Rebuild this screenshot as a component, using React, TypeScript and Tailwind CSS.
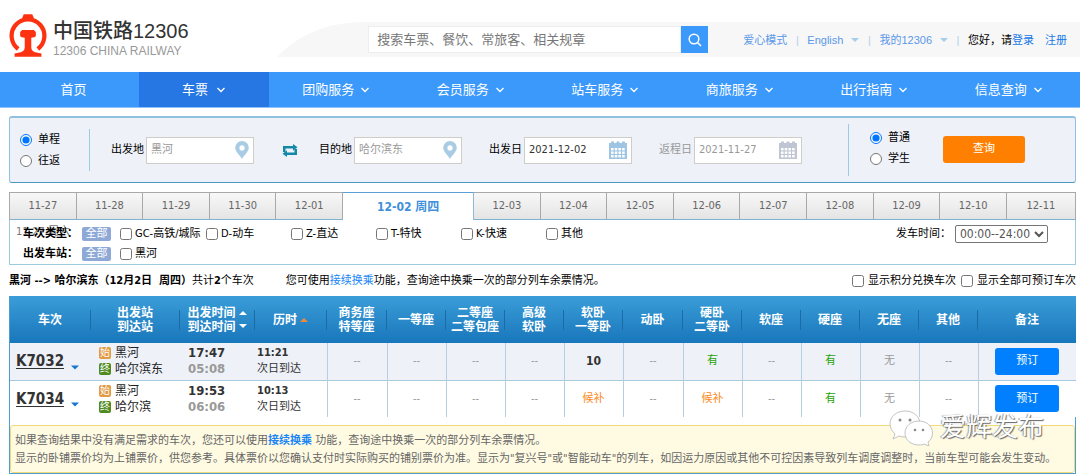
import React, { useState } from "react";

const SANS = "font-['DejaVu_Sans_Condensed','Noto_Sans_CJK_SC',sans-serif]";
const ARIAL = "font-['Liberation_Sans','Noto_Sans_CJK_SC',sans-serif]";

function RailLogo() {
  return (
    <svg viewBox="0 0 116 130" className="h-[43px] w-[38px]" fill="#fc3210" aria-hidden="true">
      <path d="M45 0h26l4 9v9H41V9z" />
      <path d="M28 106A50 50 0 1 1 88 106" fill="none" stroke="#fc3210" strokeWidth="13" />
      <path d="M40 48h36l6 6v10c0 3-2 5-5 6l-9 2v30c0 8 5 12 12 14l19 4v10H17v-10l19-4c7-2 12-6 12-14V72l-9-2c-3-1-5-3-5-6V54z" />
    </svg>
  );
}

function Chevron() {
  return (
    <svg viewBox="0 0 10 8" className="h-2 w-[10px]" fill="none" stroke="#fff" strokeWidth="1.3" aria-hidden="true">
      <path d="M1.5 2l3.5 3.5L8.500 2" />
    </svg>
  );
}

function Caret({ className }: { className: string }) {
  return (
    <svg viewBox="0 0 8 4" className={className} fill="currentColor" aria-hidden="true">
      <path d="M0 0h8L4 4z" />
    </svg>
  );
}

function PinIcon() {
  return (
    <svg viewBox="0 0 14 18" className="h-[18px] w-[14px] shrink-0" fill="#a9cbe3" aria-hidden="true">
      <path fillRule="evenodd" d="M7 0a6.800 6.800 0 0 1 6.800 6.800C13.800 10.500 9 14.500 7 18 5 14.500.200 10.500.200 6.800A6.800 6.800 0 0 1 7 0zm0 4.300a2.600 2.600 0 1 0 0 5.200 2.600 2.600 0 0 0 0-5.200z" />
    </svg>
  );
}

function CalendarIcon({ color }: { color: string }) {
  return (
    <svg viewBox="0 0 18 18" className="h-[18px] w-[18px] shrink-0" aria-hidden="true">
      <path fill={color} d="M0 2h2V.500h3V2h2.500V.500h3V2H13V.500h3V2h2v16H0z" />
      <g fill="#fff">
        {[7, 10.500, 14].map((y) => [2, 5.700, 9.400, 13.100].map((x) => <rect key={x + "-" + y} x={x} y={y} width="2.600" height="2.400" />))}
      </g>
    </svg>
  );
}

function SwapIcon() {
  return (
    <svg viewBox="0 0 16 13" className="h-[13px] w-4" fill="#1588a8" aria-hidden="true">
      <path d="M1 8V2h10V0l4.500 3.300L11 6.800V4.600H3.500V8z" />
      <path d="M15 5v6H5v2L.500 9.700 5 6.200v2.200h7.500V5z" />
    </svg>
  );
}

const NAV = ["团购服务", "会员服务", "站车服务", "商旅服务", "出行指南", "信息查询"];

function Header() {
  return (
    <header className="flex h-[72px] items-start">
      <a href="#" className="flex items-start gap-[6px] pl-[9px] pt-[14px]">
        <RailLogo />
        <span className={`${ARIAL} flex flex-col pt-1`}>
          <span className="text-[20px] leading-[26px] font-medium whitespace-nowrap text-[#333]">中国铁路12306</span>
          <span className="text-xs leading-[14px] whitespace-nowrap text-[#999]">12306 CHINA RAILWAY</span>
        </span>
      </a>
      <div className="mt-[22px] ml-auto flex h-[35px] items-center">
        <svg viewBox="0 0 90 35" className="h-[35px] w-[90px]" fill="#f7f7f7" aria-hidden="true">
          <path d="M0 34C14 20 40 0 86 0h4v35H0z" />
        </svg>
        <div className="flex h-full items-center bg-[#f7f7f7] pr-[13px]">
          <form className="flex h-[27px]" onSubmit={(e) => e.preventDefault()}>
            <input aria-label="搜索" placeholder="搜索车票、餐饮、常旅客、相关规章" className={`${ARIAL} w-[313px] border border-[#eee] bg-white px-2 text-[13px] text-[#666] outline-none placeholder:text-[#777]`} />
            <button aria-label="搜索" className="flex w-[27px] items-center justify-center bg-[#3b99fc]">
              <svg viewBox="0 0 14 14" className="h-[14px] w-[14px]" fill="none" stroke="#fff" strokeWidth="1.500" aria-hidden="true">
                <circle cx="6" cy="6" r="4.800" />
                <path d="M9.500 9.500L13 13" />
              </svg>
            </button>
          </form>
          <div className={`${ARIAL} flex items-center pl-[35px] text-[11px] whitespace-nowrap text-[#5b98e8]`}>
            <a href="#">爱心模式</a>
            <span className="w-5 text-center text-[#b5cdea]">|</span>
            <a href="#" className="flex items-center gap-2">English <Caret className="h-1 w-2 text-[#a5cdec]" /></a>
            <span className="w-5 text-center text-[#b5cdea]">|</span>
            <a href="#" className="flex items-center gap-2">我的12306 <Caret className="h-1 w-2 text-[#a5cdec]" /></a>
            <span className="w-5 text-center text-[#b5cdea]">|</span>
            <span className="text-black">您好，请</span>
            <a href="#" className="text-[#1677e6]">登录</a>
            <a href="#" className="ml-[11px] text-[#1677e6]">注册</a>
          </div>
        </div>
      </div>
    </header>
  );
}

function Nav() {
  return (
    <nav className={`${ARIAL} flex h-9 border-b border-[#8cc3f8] bg-[#3b99fc] pr-1 text-[13px] text-white`}>
      <a href="#" className="flex w-[139px] items-center justify-center pl-2">首页</a>
      <a href="#" className="flex w-[130px] items-center justify-center gap-2 bg-[#2676e3]">车票 <Chevron /></a>
      {NAV.map((n) => (
        <a key={n} href="#" className="flex flex-1 items-center justify-center gap-[6px]">{n} <Chevron /></a>
      ))}
    </nav>
  );
}

function Field({ label, value, muted, icon, dim }: { label: string; value: string; muted?: boolean; icon: React.ReactNode; dim?: boolean }) {
  return (
    <label className={`flex items-center gap-[2px] ${dim ? "text-[#999]" : "text-black"}`}>
      <span className="whitespace-nowrap">{label}</span>
      <span className="flex h-[27px] w-[108px] items-center border border-[#cfcdc7] bg-white pr-1 pl-1">
        <input defaultValue={value} className={`w-full min-w-0 bg-transparent outline-none ${muted ? "text-[#999]" : "text-[#333]"}`} />
        {icon}
      </span>
    </label>
  );
}

function Radio({ name, label, on }: { name: string; label: string; on?: boolean }) {
  return (
    <label className="flex h-[21px] items-center gap-[6px] whitespace-nowrap">
      <input type="radio" name={name} defaultChecked={on} className="m-0 h-3 w-3" />
      {label}
    </label>
  );
}

function SearchPanel() {
  return (
    <section className="flex h-[67px] items-center justify-between rounded-[3px] border border-t-2 border-[#8fc0e0] border-b-[#4a97c4] bg-[#eef1f8] pr-[50px] pl-[10px]">
      <div className="flex items-center">
        <div className="w-[70px] border-r border-[#9ccbe6]">
          <Radio name="trip" label="单程" on />
          <Radio name="trip" label="往返" />
        </div>
        <div className="flex items-center pl-[21px]">
          <Field label="出发地" value="黑河" muted icon={<PinIcon />} />
          <button aria-label="换" className="mr-[17px] ml-6 px-1"><SwapIcon /></button>
        </div>
        <div className="flex items-center gap-[27px]">
          <Field label="目的地" value="哈尔滨东" muted icon={<PinIcon />} />
          <Field label="出发日" value="2021-12-02" icon={<CalendarIcon color="#9fc5e4" />} />
          <Field label="返程日" value="2021-11-27" muted dim icon={<CalendarIcon color="#bfc5d2" />} />
        </div>
      </div>
      <div className="flex items-center">
        <div className="flex h-[52px] flex-col justify-center border-l border-[#9ccbe6] pr-[33px] pb-1 pl-[21px]">
          <Radio name="kind" label="普通" on />
          <Radio name="kind" label="学生" />
        </div>
        <button className="mb-[2px] h-[27px] w-[82px] rounded-[3px] bg-[#ff8000] text-white">查询</button>
      </div>
    </section>
  );
}

const DAYS = ["11-27", "11-28", "11-29", "11-30", "12-01", "12-02", "12-03", "12-04", "12-05", "12-06", "12-07", "12-08", "12-09", "12-10", "12-11"];

function DateTabs() {
  const [day, setDay] = useState("12-02");
  return (
    <div role="tablist" className="flex h-7 border-l border-[#a9a9a9]">
      {DAYS.map((d) =>
        d === day ? (
          <button key={d} role="tab" aria-selected="true" className="w-[131px] border-t border-r border-t-[#5aa0d4] border-r-[#8fb9d6] bg-white text-xs font-bold text-[#3e8fdc]">
            {d} 周四
          </button>
        ) : (
          <button key={d} role="tab" aria-selected="false" onClick={() => setDay(d)} className="flex-1 border-t border-r border-b border-[#a9a9a9] border-b-[#7fb3d4] bg-linear-to-b from-[#f8f8f8] to-[#e4e4e4] text-[#666] last:w-[69px] last:flex-none">
            {d}
          </button>
        )
      )}
    </div>
  );
}

function Check({ label, className }: { label: string; className?: string }) {
  return (
    <label className={`flex items-center gap-[3px] whitespace-nowrap ${className ?? ""}`}>
      <input type="checkbox" className="m-0 h-3 w-3" />
      {label}
    </label>
  );
}

function Filters() {
  return (
    <section className="relative flex h-[45px] justify-between border-x border-b border-[#9ccbe0] pt-1 pr-[27px] pl-[13px]">
      <span className="absolute top-[3px] left-[6px] text-[11px] leading-[18px] text-[#777]">11-27 周六</span>
      <div className="relative">
        <div className="flex h-5 items-center">
          <b className="w-[59px]">车次类型：</b>
          <button className="h-[14px] w-[29px] rounded-[2px] bg-[#8ea9d6] leading-[14px] text-white">全部</button>
          <Check label="GC-高铁/城际" className="ml-[9px] w-[86px]" />
          <Check label="D-动车" className="w-[85px]" />
          <Check label="Z-直达" className="w-[85px]" />
          <Check label="T-特快" className="w-[85px]" />
          <Check label="K-快速" className="w-[85px]" />
          <Check label="其他" />
        </div>
        <div className="flex h-[19px] items-center">
          <b className="w-[59px]">出发车站：</b>
          <button className="h-[14px] w-[29px] rounded-[2px] bg-[#8ea9d6] leading-[14px] text-white">全部</button>
          <Check label="黑河" className="ml-[9px]" />
        </div>
      </div>
      <label className="flex h-5 items-center gap-1">
        发车时间：
        <select className="h-[18px] w-[93px] rounded-[2px] border border-[#767676] bg-white text-xs leading-none text-[#555]">
          <option>00:00--24:00</option>
        </select>
      </label>
    </section>
  );
}

const COLS = ["w-[81px]", "w-[89px]", "w-[75px]", "w-[72px]", "w-[60px]", "w-[59px]", "w-[59px]", "w-[59px]", "w-[59px]", "w-[60px]", "w-[59px]", "w-[59px]", "w-[59px]", "w-[59px]", "w-[59px]", "w-[98px]"];

const HEADS: string[][] = [
  ["车次"], ["出发站", "到达站"], ["出发时间", "到达时间"], ["历时"], ["商务座", "特等座"], ["一等座"], ["二等座", "二等包座"], ["高级", "软卧"],
  ["软卧", "一等卧"], ["动卧"], ["硬卧", "二等卧"], ["软座"], ["硬座"], ["无座"], ["其他"], ["备注"],
];

const TRAINS = [
  { no: "K7032", to: "哈尔滨东", dep: "17:47", arr: "05:08", dur: "11:21", seats: ["--", "--", "--", "--", "10", "--", "有", "--", "有", "无", "--"] },
  { no: "K7034", to: "哈尔滨", dep: "19:53", arr: "06:06", dur: "10:13", seats: ["--", "--", "--", "--", "候补", "--", "候补", "--", "有", "无", "--"] },
];

function seatStyle(s: string) {
  if (s === "有") return "text-[#26a306]";
  if (s === "候补") return "text-[#fb8a1a]";
  if (s === "10") return "text-xs font-bold text-[#333]";
  return "text-[#999]";
}

function Badge({ text, green }: { text: string; green?: boolean }) {
  return (
    <span className={`flex h-3 w-3 items-center justify-center rounded-[2px] text-[10px] leading-3 text-white ${green ? "bg-[#4e8a20]" : "bg-[#e39a45]"}`}>{text}</span>
  );
}

function TrainTable() {
  return (
    <table className="w-full table-fixed border-collapse">
      <colgroup>
        {COLS.map((c, i) => <col key={i} className={c} />)}
      </colgroup>
      <thead className="bg-linear-to-b from-[#3a9dd8] to-[#1876bb] text-xs leading-[14px] text-white">
        <tr className="h-[47px]">
          {HEADS.map((lines, i) => (
            <th key={i} className="p-0">
              <div className={`flex h-5 items-center justify-center gap-[3px] whitespace-nowrap ${i < 15 ? "border-r border-[#1c6ba6]" : ""}`}>
                <span>{lines.map((l) => <span key={l} className="block">{l}</span>)}</span>
                {i === 2 && (
                  <span className="flex flex-col gap-[9px]">
                    <Caret className="h-1 w-2 rotate-180" />
                    <Caret className="h-1 w-2" />
                  </span>
                )}
                {i === 3 && <Caret className="h-1 w-2 rotate-180 text-[#f08a3c]" />}
              </div>
            </th>
          ))}
        </tr>
      </thead>
      <tbody>
        {TRAINS.map((t, i) => (
          <tr key={t.no} className={`h-[37px] ${i === 0 ? "border-b border-[#a9c9de] bg-[#eef1f8]" : "bg-white"}`}>
            <td className="p-0">
              <div className="flex items-center gap-[7px] pl-[6px]">
                <a href="#" className="text-[15px] leading-5 font-bold text-[#333] underline underline-offset-2">{t.no}</a>
                <Caret className="mt-3 h-[5px] w-2 text-[#1777d0]" />
              </div>
            </td>
            <td className="p-0 text-xs leading-4 text-[#222]">
              <div className="flex items-center gap-1 pl-2 whitespace-nowrap"><Badge text="始" />黑河</div>
              <div className="flex items-center gap-1 pl-2 whitespace-nowrap"><Badge text="终" green />{t.to}</div>
            </td>
            <td className="p-0 pl-2 text-[13px] leading-4 font-bold">
              <div className="text-[#333]">{t.dep}</div>
              <div className="text-[#999]">{t.arr}</div>
            </td>
            <td className="p-0 pl-[2px] text-[11px] leading-4 text-[#333]">
              <div className="font-bold">{t.dur}</div>
              <div>次日到达</div>
            </td>
            {t.seats.map((s, k) => (
              <td key={k} className={`border-l border-[#b3cfe0] p-0 text-center ${seatStyle(s)}`}>{s}</td>
            ))}
            <td className="border-l border-[#b3cfe0] p-0 text-center">
              <button className="h-[27px] w-16 rounded-[3px] bg-[#0080ff] align-middle text-white">预订</button>
            </td>
          </tr>
        ))}
      </tbody>
    </table>
  );
}

function Watermark() {
  return (
    <div className="pointer-events-none absolute right-[32px] bottom-[28px] flex items-center gap-[6px]">
      <svg viewBox="0 0 46 38" className="h-[38px] w-[46px]" fill="#fff" stroke="#aaa" strokeWidth="0.700" aria-hidden="true">
        <path d="M17 3C8 3 2 9 2 16c0 4 2 7 5 10l-2 5 6-3c2 .700 4 1 6 1 9 0 15-6 15-13S26 3 17 3z" />
        <path d="M31 13c-8 0-14 5-14 12s6 12 14 12c2 0 4-.300 5-1l5 2-1-4c3-2 4.500-5 4.500-9 0-7-6-12-13.500-12z" />
        <g fill="#888" stroke="none">
          <circle cx="12" cy="12" r="1.500" /><circle cx="22" cy="12" r="1.500" />
          <circle cx="27" cy="22" r="1.300" /><circle cx="35" cy="22" r="1.300" />
        </g>
      </svg>
      <span className="text-[26px] leading-8 text-white [text-shadow:1px_1px_1px_#666,-1px_0_1px_#999]">爱辉发布</span>
    </div>
  );
}

export default function App() {
  return (
    <div className={`${SANS} min-h-screen bg-white text-[11px] leading-4 text-black`}>
      <Header />
      <Nav />
      <main className="relative mt-2 mr-1 ml-[9px]">
        <SearchPanel />
        <div className="mt-[9px]">
          <DateTabs />
          <Filters />
        </div>
        <div className="flex h-[31px] items-center whitespace-nowrap">
          <p><b>黑河 --&gt; 哈尔滨东（12月2日&nbsp; 周四）</b>共计<b>2</b>个车次</p>
          <p className="ml-8">您可使用<a href="#" className="text-[#1a86f5]">接续换乘</a>功能，查询途中换乘一次的部分列车余票情况。</p>
          <div className="ml-auto flex gap-[5px]">
            <label className="flex items-center gap-1"><input type="checkbox" className="m-0 h-3 w-3" />显示积分兑换车次</label>
            <label className="flex items-center gap-1"><input type="checkbox" className="m-0 h-3 w-3" />显示全部可预订车次</label>
          </div>
        </div>
        <section className="border-x border-b border-[#4b9fd0]">
          <TrainTable />
          <div className="mt-2 rounded-[3px] border border-[#f2da7c] bg-[#fffbe3] px-1 pt-[6px] pb-1 leading-[18px] whitespace-nowrap text-[#666]">
            <p>如果查询结果中没有满足需求的车次，您还可以使用<a href="#" className="font-bold text-[#1a86f5]">接续换乘</a> 功能，查询途中换乘一次的部分列车余票情况。</p>
            <p>显示的卧铺票价均为上铺票价，供您参考。具体票价以您确认支付时实际购买的铺别票价为准。显示为"复兴号"或"智能动车"的列车，如因运力原因或其他不可控因素导致列车调度调整时，当前车型可能会发生变动。</p>
          </div>
        </section>
        <Watermark />
      </main>
    </div>
  );
}
